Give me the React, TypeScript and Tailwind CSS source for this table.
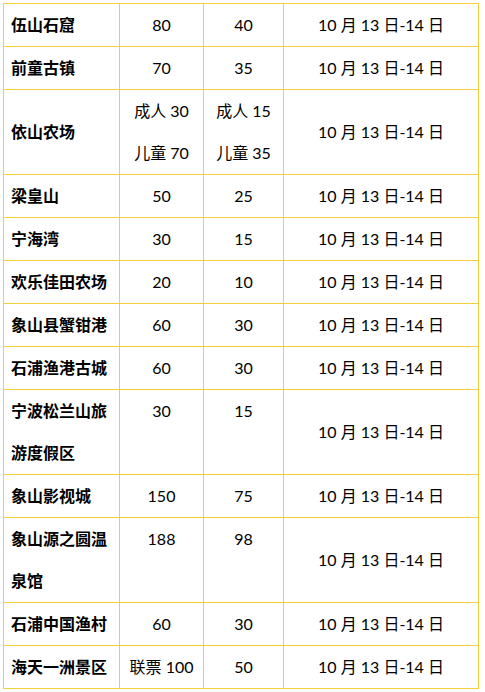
type Row = {
  name: string[]
  a: string[]
  b: string[]
  top?: boolean
}

const DATE = "10 月 13 日-14 日"

const rows: Row[] = [
  { name: ["伍山石窟"], a: ["80"], b: ["40"] },
  { name: ["前童古镇"], a: ["70"], b: ["35"] },
  { name: ["依山农场"], a: ["成人 30", "儿童 70"], b: ["成人 15", "儿童 35"] },
  { name: ["梁皇山"], a: ["50"], b: ["25"] },
  { name: ["宁海湾"], a: ["30"], b: ["15"] },
  { name: ["欢乐佳田农场"], a: ["20"], b: ["10"] },
  { name: ["象山县蟹钳港"], a: ["60"], b: ["30"] },
  { name: ["石浦渔港古城"], a: ["60"], b: ["30"] },
  { name: ["宁波松兰山旅", "游度假区"], a: ["30"], b: ["15"], top: true },
  { name: ["象山影视城"], a: ["150"], b: ["75"] },
  { name: ["象山源之圆温", "泉馆"], a: ["188"], b: ["98"], top: true },
  { name: ["石浦中国渔村"], a: ["60"], b: ["30"] },
  { name: ["海天一洲景区"], a: ["联票 100"], b: ["50"] },
]

function Lines({ items }: { items: string[] }) {
  return (
    <div>
      {items.map((t, i) => (
        <div key={i} className="h-[42px] leading-[42px] whitespace-nowrap">
          {t}
        </div>
      ))}
    </div>
  )
}

export default function App() {
  return (
    <div
      className="bg-white w-[485px] h-[692px] overflow-hidden pt-[3px] pl-[3px] text-[16px] text-black"
      style={{ fontFamily: "Lato, 'Noto Sans CJK SC', sans-serif" }}
    >
      <div className="grid grid-cols-[116px_84px_80px_195px] w-fit border-t border-l border-[#f3cf3c]">
        {rows.map((r) => (
          <div key={r.name.join("")} className="contents">
            <div className="flex items-center border-r border-b border-[#f3cf3c] pl-[7px] font-bold">
              <Lines items={r.name} />
            </div>
            <div
              className={`flex justify-center border-r border-b border-[#f3cf3c] ${r.top ? "items-start" : "items-center"}`}
            >
              <Lines items={r.a} />
            </div>
            <div
              className={`flex justify-center border-r border-b border-[#f3cf3c] ${r.top ? "items-start" : "items-center"}`}
            >
              <Lines items={r.b} />
            </div>
            <div className="flex items-center justify-center border-r border-b border-[#f3cf3c]">
              <Lines items={[DATE]} />
            </div>
          </div>
        ))}
      </div>
    </div>
  )
}
